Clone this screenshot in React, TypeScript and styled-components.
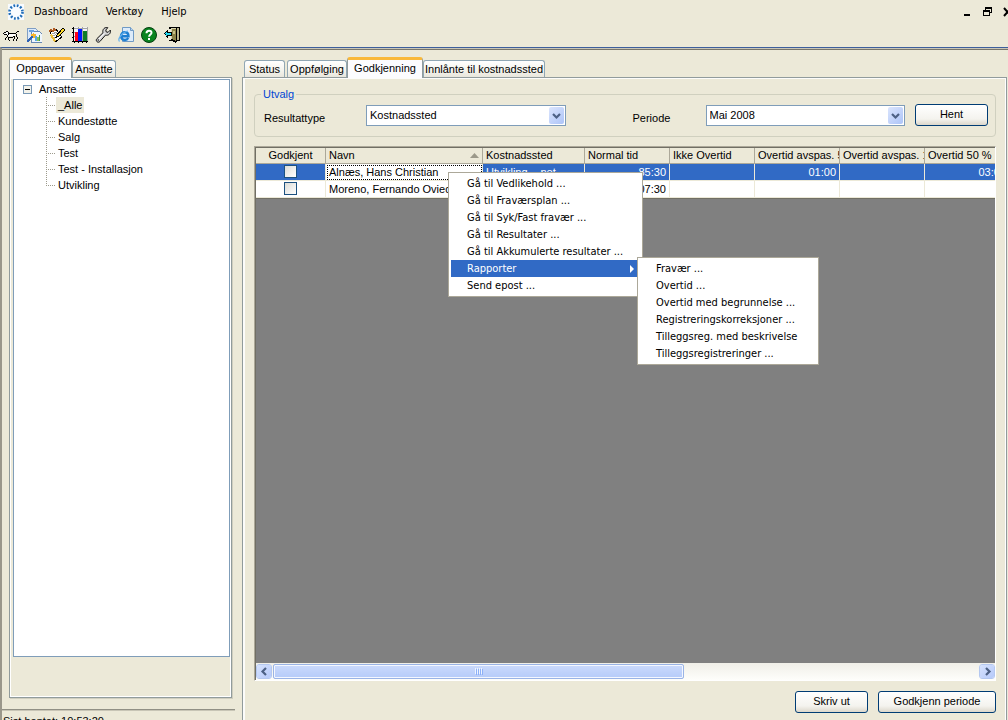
import React from 'react';
import styled, { createGlobalStyle, css } from 'styled-components';

const face = '#ECE9D8';
const select = '#316AC5';
const sans = '"Liberation Sans", Arial, sans-serif';
const menuFont = '"DejaVu Sans Condensed", "DejaVu Sans", Tahoma, sans-serif';

const GlobalStyle = createGlobalStyle`
  * { box-sizing: border-box; }
  body {
    margin: 0;
    background: ${face};
    color: #000;
    font: 11px/14px ${sans};
  }
  button, select, input { font: inherit; color: inherit; margin: 0; }
  ul { list-style: none; margin: 0; padding: 0; }
  svg { display: block; }
`;

const Shell = styled.div`
  position: relative;
  display: flex;
  flex-direction: column;
  height: 100vh;
  overflow: hidden;
`;

const MenuBar = styled.header`
  display: flex;
  align-items: center;
  flex: none;
  height: 23px;
  padding-left: 8px;
  font-family: ${menuFont};
`;

const MenuNav = styled.nav`
  display: flex;
  gap: 18px;
  padding-left: 10px;
`;

const FlatButton = styled.button`
  border: 0;
  padding: 0;
  background: transparent;
`;

const WindowButtons = styled.div`
  display: flex;
  gap: 10px;
  margin-left: auto;
  margin-right: -5px;
`;

const Toolbar = styled.div`
  display: flex;
  align-items: center;
  flex: none;
  gap: 7px;
  height: 24px;
  padding-left: 3px;
`;

const Workspace = styled.div`
  display: flex;
  flex: 1;
  min-height: 0;
  border-top: 1px solid #3d5f9c;
  border-left: 2px solid #9a978b;
  box-shadow: inset 0 1px #c9c6b8, inset 0 2px #77756b;
`;

const Sidebar = styled.aside`
  display: flex;
  flex-direction: column;
  flex: none;
  width: 240px;
  padding-top: 9px;
`;

const Content = styled.main`
  display: flex;
  flex-direction: column;
  flex: 1;
  min-width: 0;
  padding-top: 9px;
  padding-right: 1px;
`;

const TabList = styled.div<{ $indent: number }>`
  display: flex;
  align-items: flex-end;
  flex: none;
  height: 20px;
  padding-left: ${p => p.$indent}px;
`;

const Tab = styled.button<{ $width: number; $active?: boolean; $gap?: boolean }>`
  width: ${p => p.$width}px;
  height: 17px;
  padding: 0;
  margin-left: ${p => (p.$gap ? 2 : 0)}px;
  border: 1px solid #91a7b4;
  border-bottom: 0;
  border-radius: 3px 3px 0 0;
  background: linear-gradient(#fff, #f4f3ec 60%, #e8e6dc);
  white-space: nowrap;
  ${p =>
    p.$active &&
    css`
      position: relative;
      height: 21px;
      margin-bottom: -1px;
      padding-bottom: 3px;
      border-color: #919b9c;
      border-top: 3px solid #f9b83a;
      background: #fcfcfe;
    `}
`;

const SidePanel = styled.section`
  display: flex;
  flex: 1;
  min-height: 0;
  margin: 0 10px 11px 7px;
  padding: 1px 1px 40px 3px;
  border: 1px solid #919b9c;
  box-shadow: inset 1px 1px #fff, inset -1px -1px #fff, 1px 1px #d0cebf;
`;

const Tree = styled.ul`
  flex: 1;
  padding: 1px 0 0 9px;
  border: 1px solid #7f9db9;
  background: #fff;
`;

const TreeRow = styled.div<{ $child?: boolean }>`
  display: flex;
  align-items: center;
  height: 16px;
  gap: ${p => (p.$child ? 1 : 5)}px;
  padding-left: ${p => (p.$child ? 23 : 0)}px;
`;

const TreeLabel = styled.span<{ $selected?: boolean }>`
  padding: 0 2px;
  line-height: 16px;
  background: ${p => (p.$selected ? face : 'transparent')};
`;

const Status = styled.footer`
  flex: none;
  height: 11px;
  margin-right: 7px;
  padding: 4px 1px 0;
  overflow: hidden;
  border-top: 1px solid #919085;
  box-shadow: inset 0 1px #c8c5b6;
`;

const Panel = styled.section`
  display: flex;
  flex-direction: column;
  flex: 1;
  min-height: 0;
  padding: 9px 10px 7px 11px;
  border: solid #919b9c;
  border-width: 1px 1px 0;
  box-shadow: inset 2px 1px #fcfcfa, inset -1px 0 #fff;
`;

const Group = styled.fieldset`
  flex: none;
  height: 50px;
  min-width: 0;
  margin: 0 0 9px;
  padding: 0 7px 0 9px;
  border: 1px solid #d0d0bf;
  border-radius: 4px;
`;

const Legend = styled.legend`
  margin-left: -3px;
  padding: 0 2px;
  color: #0046d5;
`;

const Filters = styled.div`
  display: grid;
  grid-template-columns: 102px minmax(0, 1fr) 67px 73px minmax(0, 1fr) 10px 73px;
  align-items: center;
  height: 28px;
`;

const FieldLabel = styled.label<{ $column: number }>`
  grid-column: ${p => p.$column};
  padding-top: 6px;
`;

const Combo = styled.div`
  position: relative;
`;

const Select = styled.select`
  display: block;
  width: 100%;
  height: 21px;
  padding: 0 20px 0 3px;
  appearance: none;
  border: 1px solid #7f9db9;
  border-radius: 0;
  background: #fff;
`;

const ComboArrow = styled.span`
  position: absolute;
  top: 2px;
  right: 2px;
  bottom: 2px;
  display: grid;
  place-items: center;
  width: 15px;
  border-radius: 2px;
  background: linear-gradient(135deg, #dbe5fd, #adc4f8);
  pointer-events: none;
`;

const Button = styled.button<{ $width: number; $column?: number }>`
  grid-column: ${p => p.$column ?? 'auto'};
  width: ${p => p.$width}px;
  height: 22px;
  padding: 0 0 2px;
  border: 1px solid #003c74;
  border-radius: 3px;
  background: linear-gradient(#fff, #f4f3ee 70%, #dcd7cb);
`;

const Grid = styled.div`
  display: flex;
  flex-direction: column;
  flex: 1;
  min-height: 0;
  border: 1px solid;
  border-color: #aca899 #fff #fff #aca899;
`;

const GridBody = styled.div`
  flex: 1;
  min-height: 0;
  overflow: hidden;
  border: solid #716f64;
  border-width: 1px 0 0 1px;
  background: #808080;
`;

const Table = styled.table`
  table-layout: fixed;
  width: 754px;
  border-collapse: separate;
  border-spacing: 0;
  border-bottom: 1px solid #716f64;
  background: #fff;
`;

const HeadCell = styled.th<{ $center?: boolean }>`
  height: 16px;
  padding: 0 3px;
  overflow: hidden;
  border-right: 1px solid #aca899;
  border-bottom: 1px solid #aca899;
  background: ${face};
  font-weight: normal;
  line-height: 15px;
  text-align: ${p => (p.$center ? 'center' : 'left')};
  text-overflow: clip;
  white-space: nowrap;
`;

const HeadSort = styled.span`
  display: flex;
  align-items: center;
  justify-content: space-between;
`;

const Row = styled.tr<{ $selected?: boolean }>`
  background: ${p => (p.$selected ? select : '#fff')};
  color: ${p => (p.$selected ? '#fff' : '#000')};
`;

const Cell = styled.td<{ $align?: 'center' | 'right'; $focused?: boolean }>`
  height: 17px;
  padding: 0 3px;
  overflow: hidden;
  border-right: 1px solid ${face};
  border-bottom: 1px solid ${face};
  line-height: 16px;
  text-align: ${p => p.$align ?? 'left'};
  vertical-align: top;
  white-space: nowrap;
  ${p =>
    p.$focused &&
    css`
      outline: 1px dotted #000;
      outline-offset: -2px;
      background: #fff;
      color: #000;
    `}
`;

const Check = styled.input`
  display: block;
  width: 13px;
  height: 13px;
  margin: 1px auto 0;
  appearance: none;
  border: 1px solid #1c5180;
  background: linear-gradient(135deg, #dcdcd7, #fff);
`;

const ScrollBar = styled.div`
  display: flex;
  flex: none;
  height: 17px;
  padding: 1px 0;
  border-left: 1px solid #716f64;
  background: linear-gradient(#f0efe8, #fefefb);
`;

const ScrollButton = styled.button`
  display: grid;
  place-items: center;
  flex: none;
  width: 16px;
  padding: 0;
  border: 1px solid #fff;
  border-radius: 3px;
  outline: 1px solid #b4c8f0;
  outline-offset: -1px;
  background: linear-gradient(135deg, #d6e2fd, #b6cafa);
`;

const ScrollTrack = styled.div`
  display: flex;
  flex: 1;
  padding: 0 1px;
`;

const ScrollThumb = styled.div`
  display: grid;
  place-items: center;
  width: calc(100% * 7 / 12);
  border: 1px solid #9ab4e6;
  border-radius: 2px;
  box-shadow: inset 0 0 0 1px #f4f7ff;
  background: linear-gradient(#cbdafc, #b5cbf9);
`;

const Actions = styled.div`
  display: flex;
  flex: none;
  justify-content: flex-end;
  gap: 10px;
  padding-top: 10px;
`;

const Menu = styled.ul<{ $width: number; $left: number; $top: number }>`
  position: absolute;
  left: ${p => p.$left}px;
  top: ${p => p.$top}px;
  width: ${p => p.$width}px;
  padding: 2px;
  border: 1px solid #aca899;
  background: #fff;
  font-family: ${menuFont};
`;

const MenuEntry = styled.li`
  position: relative;
`;

const MenuItem = styled.button<{ $active?: boolean }>`
  display: flex;
  align-items: center;
  justify-content: space-between;
  width: 100%;
  height: 17px;
  padding: 0 6px 0 16px;
  border: 0;
  background: ${p => (p.$active ? select : 'transparent')};
  color: ${p => (p.$active ? '#fff' : '#000')};
  text-align: left;
  white-space: nowrap;
`;

const AppLogo = () => (
  <svg width="16" height="16" viewBox="0 0 16 16">
    <rect width="16" height="16" fill="#f8fbff" />
    <circle cx="8" cy="8" r="6.500" fill="none" stroke="#1f6cb8" strokeWidth="2.600" strokeDasharray="1.800 1.603" />
  </svg>
);

const Icon = ({ children }: { children: React.ReactNode }) => (
  <svg width="16" height="16" viewBox="0 0 16 16" shapeRendering="crispEdges">
    {children}
  </svg>
);

const DogIcon = () => (
  <Icon>
    <path d="M2 5h3v1h7v3H5V8H2z" fill="#fff" />
    <path
      d="M3 4h2v1H3zM1 5h2v1H1zM5 5h1v1H5zM14 4h2v1h-2zM13 5h1v1h-1zM0 6h1v1H0zM6 6h7v1H6zM1 7h3v1H1zM5 6h1v2H5zM13 7h1v3h-1zM4 8h1v2H4zM5 10h5v1H5zM10 9h2v1h-2zM3 10h1v1H3zM2 11h1v2H2zM5 11h1v2H5zM6 13h1v1H6zM11 10h1v2h-1zM10 12h1v2h-1zM14 10h1v2h-1zM13 12h1v2h-1z"
      fill="#000"
    />
  </Icon>
);

const ReportIcon = () => (
  <Icon>
    <path d="M1 1h8l2 2v9H1z" fill="#dceafa" stroke="#7f9ec4" />
    <path d="M5 4h8l3 3v8H5z" fill="#eef5fd" stroke="#6688b4" />
    <path d="M3 3h5v2H3z" fill="#6aa2e0" />
    <path d="M9 9h2v5H9z" fill="#55a8e8" />
    <path d="M11 10h2v4h-2z" fill="#8cc152" />
    <path d="M13 8h1v6h-1z" fill="#3d9a50" />
    <path d="M1 15L7 9" stroke="#2f62b5" strokeWidth="2" />
    <path d="M5 7h2V6h1v1h2v2H9v2H7V9H5z" fill="#f7b52c" />
  </Icon>
);

const NotesIcon = () => (
  <Icon>
    <path d="M1 5l6-3 6 8-7 5z" fill="#fff" stroke="#000" />
    <path d="M0 5l2-2 2 1 1-2 2 2" fill="none" stroke="#b05b22" strokeWidth="2" />
    <path d="M3 7l5-2M4 9l5-3M5 11l5-3" stroke="#a6a6a6" />
    <path d="M7 9l7-8 2 2-7 7z" fill="#ffdc2e" stroke="#000" />
    <path d="M6 10h2v1H6z" fill="#000" />
    <path d="M1 8l4 7 2-1-4-7z" fill="#e9bd3c" />
  </Icon>
);

const ChartIcon = () => (
  <Icon>
    <path d="M2 0h14v14H2z" fill="#f2f2f2" />
    <path d="M2 1.500h14M2 5.500h14M2 9.500h14M6.500 0v14M10.500 0v14M15.500 0v14" stroke="#a4a4a4" />
    <path d="M1 0h1v14h14v1h-1v1h-1v-1h-3v1h-1v-1H7v1H6v-1H3v1H2v-1H0v-1h1v-3H0v-1h1V6H0V5h1V2H0V1h1z" fill="#000" />
    <path d="M3 5h3v9H3z" fill="#ff0018" />
    <path d="M6 2h4v12H6z" fill="#0018ff" />
    <path d="M11 4h4v10h-4z" fill="#0c7c27" />
  </Icon>
);

const WrenchIcon = () => (
  <svg width="16" height="16" viewBox="0 0 16 16">
    <path
      d="M9 1.500c1-1 2.500-1.200 3.800-.8L10.800 3l.4 1.900 1.900.4 2.200-2.200c.5 1.500 0 3.100-1 4.100-1.100 1-2.500 1.300-3.800.9L4.900 14.500c-.8.9-2.200.9-3 .1s-.8-2.100 0-2.900L8 5.700c-.5-1.400-.1-3.100 1-4.200z"
      fill="#d4d4d4"
      stroke="#111"
    />
    <path d="M3.300 12.500l6-6" stroke="#fff" />
    <circle cx="3.300" cy="13" r=".8" fill="#222" />
  </svg>
);

const BrowserIcon = () => (
  <svg width="16" height="16" viewBox="0 0 16 16">
    <path d="M4.500.5h8l3 3v11h-11z" fill="#dcebfa" stroke="#6f9ac5" />
    <path d="M12.500.5v3h3" fill="#b8d2ed" stroke="#6f9ac5" />
    <path d="M10.200 11c-.7 1.300-1.900 2-3.400 2-2.200 0-3.800-1.600-3.800-3.900s1.600-3.900 3.800-3.900 3.700 1.600 3.700 4.100H4" fill="none" stroke="#1e7fd0" strokeWidth="2.400" />
    <path d="M1.500 14.500C-1 12 5 4.500 10 4" fill="none" stroke="#63b1ee" strokeWidth="1.200" />
  </svg>
);

const HelpIcon = () => (
  <svg width="16" height="16" viewBox="0 0 16 16">
    <circle cx="8" cy="8" r="7.500" fill="#0a8420" stroke="#053f10" />
    <path d="M5.500 6.200c0-3.400 5-3.300 5-.4 0 1.700-2.400 1.800-2.400 4" fill="none" stroke="#fff" strokeWidth="2" />
    <path d="M7 11h2v2H7z" fill="#fff" />
  </svg>
);

const ExitIcon = () => (
  <Icon>
    <path d="M5 0h11v14h-3v1h-1v1h-1v-1H9v-1H5v-1h2V2H5z" fill="#000" />
    <path d="M13 1h2v12h-2z" fill="#b9b48b" />
    <path d="M7 1h5v1H8v10H7z" fill="#d8d4b0" />
    <path d="M8 2h4v12h-1v-1H9v-1H8z" fill="#8b8348" />
    <path d="M9 4h2v3H9z" fill="#c7c08a" />
    <path d="M0 6l4-4v3h4v4H4v3z" fill="#000" />
    <path d="M1 6l2-2v2h4v2H3v2z" fill="#22d8f0" />
  </Icon>
);

const tools: [string, () => React.ReactElement][] = [
  ['Søk', DogIcon],
  ['Rapport', ReportIcon],
  ['Notater', NotesIcon],
  ['Diagram', ChartIcon],
  ['Innstillinger', WrenchIcon],
  ['Nettleser', BrowserIcon],
  ['Hjelp', HelpIcon],
  ['Avslutt', ExitIcon],
];

const Branch = ({ last }: { last: boolean }) => (
  <svg width="9" height="16" viewBox="0 0 9 16" shapeRendering="crispEdges">
    <path d={last ? 'M.5 0v9' : 'M.5 0v16'} stroke="#9c9a8c" strokeDasharray="1 1" />
    <path d="M2 8.500h7" stroke="#9c9a8c" strokeDasharray="1 1" />
  </svg>
);

const Collapse = () => (
  <svg width="9" height="9" viewBox="0 0 9 9" shapeRendering="crispEdges">
    <rect x=".5" y=".5" width="8" height="8" fill="#f3f2ea" stroke="#7898b5" />
    <path d="M2 4.500h5" stroke="#000" />
  </svg>
);

const Chevron = ({ turn = 0 }: { turn?: number }) => (
  <svg width="9" height="9" viewBox="0 0 9 9">
    <path d="M1 3l3.500 3.500L8 3" fill="none" stroke="#4d6185" strokeWidth="2.200" transform={`rotate(${turn} 4.500 4.500)`} />
  </svg>
);

const Dropdown = ({ id, value }: { id: string; value: string }) => (
  <Combo>
    <Select id={id} defaultValue={value}>
      <option>{value}</option>
    </Select>
    <ComboArrow>
      <Chevron />
    </ComboArrow>
  </Combo>
);

const departments = ['_Alle', 'Kundestøtte', 'Salg', 'Test', 'Test - Installasjon', 'Utvikling'];
const columns = [70, 157, 102, 85, 85, 85, 85, 85];
const rows = [
  { name: 'Alnæs, Hans Christian', place: 'Utvikling - .net', values: ['85:30', '', '01:00', '', '03:00'] },
  { name: 'Moreno, Fernando Oviedo', place: '', values: ['107:30', '', '', '', ''] },
];
const reports = [
  'Fravær ...',
  'Overtid ...',
  'Overtid med begrunnelse ...',
  'Registreringskorreksjoner ...',
  'Tilleggsreg. med beskrivelse',
  'Tilleggsregistreringer ...',
];
const shortcuts = [
  'Gå til Vedlikehold ...',
  'Gå til Fraværsplan ...',
  'Gå til Syk/Fast fravær ...',
  'Gå til Resultater ...',
  'Gå til Akkumulerte resultater ...',
];

const ContextMenu = () => (
  <Menu role="menu" $left={448} $top={172} $width={195}>
    {shortcuts.map(label => (
      <MenuEntry key={label} role="none">
        <MenuItem role="menuitem">{label}</MenuItem>
      </MenuEntry>
    ))}
    <MenuEntry role="none">
      <MenuItem role="menuitem" aria-haspopup="menu" aria-expanded $active>
        Rapporter
        <svg width="4" height="8" viewBox="0 0 4 8">
          <path d="M0 0l4 4-4 4z" fill="#fff" />
        </svg>
      </MenuItem>
      <Menu role="menu" $left={186} $top={-3} $width={182}>
        {reports.map(label => (
          <MenuEntry key={label} role="none">
            <MenuItem role="menuitem">{label}</MenuItem>
          </MenuEntry>
        ))}
      </Menu>
    </MenuEntry>
    <MenuEntry role="none">
      <MenuItem role="menuitem">Send epost ...</MenuItem>
    </MenuEntry>
  </Menu>
);

export default function App() {
  return (
    <Shell>
      <GlobalStyle />
      <MenuBar>
        <AppLogo />
        <MenuNav>
          <FlatButton>Dashboard</FlatButton>
          <FlatButton>Verktøy</FlatButton>
          <FlatButton>Hjelp</FlatButton>
        </MenuNav>
        <WindowButtons>
          <FlatButton aria-label="Minimer">
            <svg width="10" height="10" viewBox="0 0 10 10">
              <path d="M1 7h6v2H1z" />
            </svg>
          </FlatButton>
          <FlatButton aria-label="Gjenopprett">
            <svg width="10" height="10" viewBox="0 0 10 10" shapeRendering="crispEdges">
              <path d="M2 0h7v6H7V5h1V2H3v1H2zM0 3h7v6H0zM1 5v3h5V5z" fillRule="evenodd" />
            </svg>
          </FlatButton>
          <FlatButton aria-label="Lukk">
            <svg width="10" height="10" viewBox="0 0 10 10">
              <path d="M1 1l7 8M8 1L1 9" stroke="#000" strokeWidth="2" />
            </svg>
          </FlatButton>
        </WindowButtons>
      </MenuBar>
      <Toolbar>
        {tools.map(([label, Drawing]) => (
          <FlatButton key={label} aria-label={label}>
            <Drawing />
          </FlatButton>
        ))}
      </Toolbar>
      <Workspace>
        <Sidebar>
          <TabList $indent={7} role="tablist">
            <Tab role="tab" aria-selected $width={63} $active>Oppgaver</Tab>
            <Tab role="tab" $width={44}>Ansatte</Tab>
          </TabList>
          <SidePanel>
            <Tree>
              <li>
                <TreeRow>
                  <Collapse />
                  <TreeLabel>Ansatte</TreeLabel>
                </TreeRow>
                <ul>
                  {departments.map((label, i) => (
                    <li key={label}>
                      <TreeRow $child>
                        <Branch last={i === departments.length - 1} />
                        <TreeLabel $selected={i === 0}>{label}</TreeLabel>
                      </TreeRow>
                    </li>
                  ))}
                </ul>
              </li>
            </Tree>
          </SidePanel>
          <Status>Sist hentet: 10:53:20</Status>
        </Sidebar>
        <Content>
          <TabList $indent={2} role="tablist">
            <Tab role="tab" $width={41}>Status</Tab>
            <Tab role="tab" $width={60} $gap>Oppfølging</Tab>
            <Tab role="tab" aria-selected $width={76} $active>Godkjenning</Tab>
            <Tab role="tab" $width={122}>Innlånte til kostnadssted</Tab>
          </TabList>
          <Panel>
            <Group>
              <Legend>Utvalg</Legend>
              <Filters>
                <FieldLabel htmlFor="type" $column={1}>Resultattype</FieldLabel>
                <Dropdown id="type" value="Kostnadssted" />
                <FieldLabel htmlFor="period" $column={4}>Periode</FieldLabel>
                <Dropdown id="period" value="Mai 2008" />
                <Button $width={73} $column={7}>Hent</Button>
              </Filters>
            </Group>
            <Grid>
              <GridBody>
                <Table>
                  <colgroup>
                    {columns.map((width, i) => (
                      <col key={i} width={width} />
                    ))}
                  </colgroup>
                  <thead>
                    <tr>
                      <HeadCell $center>Godkjent</HeadCell>
                      <HeadCell>
                        <HeadSort>
                          Navn
                          <svg width="9" height="5" viewBox="0 0 9 5">
                            <path d="M0 5l4.500-5L9 5z" fill="#9c998a" />
                          </svg>
                        </HeadSort>
                      </HeadCell>
                      <HeadCell>Kostnadssted</HeadCell>
                      <HeadCell>Normal tid</HeadCell>
                      <HeadCell>Ikke Overtid</HeadCell>
                      <HeadCell>Overtid avspas. 50 %</HeadCell>
                      <HeadCell>Overtid avspas. 100 %</HeadCell>
                      <HeadCell>Overtid 50 %</HeadCell>
                    </tr>
                  </thead>
                  <tbody>
                    {rows.map((row, i) => (
                      <Row key={row.name} $selected={i === 0}>
                        <Cell $align="center">
                          <Check type="checkbox" aria-label={`Godkjent ${row.name}`} />
                        </Cell>
                        <Cell $focused={i === 0}>{row.name}</Cell>
                        <Cell>{row.place}</Cell>
                        {row.values.map((value, n) => (
                          <Cell key={n} $align="right">{value}</Cell>
                        ))}
                      </Row>
                    ))}
                  </tbody>
                </Table>
              </GridBody>
              <ScrollBar>
                <ScrollButton aria-label="Rull til venstre">
                  <Chevron turn={90} />
                </ScrollButton>
                <ScrollTrack>
                  <ScrollThumb>
                    <svg width="8" height="7" viewBox="0 0 8 7" shapeRendering="crispEdges">
                      <path d="M.5 0v6M2.500 0v6M4.500 0v6M6.500 0v6" stroke="#eef4fe" />
                      <path d="M1.500 1v6M3.500 1v6M5.500 1v6M7.500 1v6" stroke="#8cb0f8" />
                    </svg>
                  </ScrollThumb>
                </ScrollTrack>
                <ScrollButton aria-label="Rull til høyre">
                  <Chevron turn={-90} />
                </ScrollButton>
              </ScrollBar>
            </Grid>
            <Actions>
              <Button $width={73}>Skriv ut</Button>
              <Button $width={118}>Godkjenn periode</Button>
            </Actions>
          </Panel>
        </Content>
      </Workspace>
      <ContextMenu />
    </Shell>
  );
}
